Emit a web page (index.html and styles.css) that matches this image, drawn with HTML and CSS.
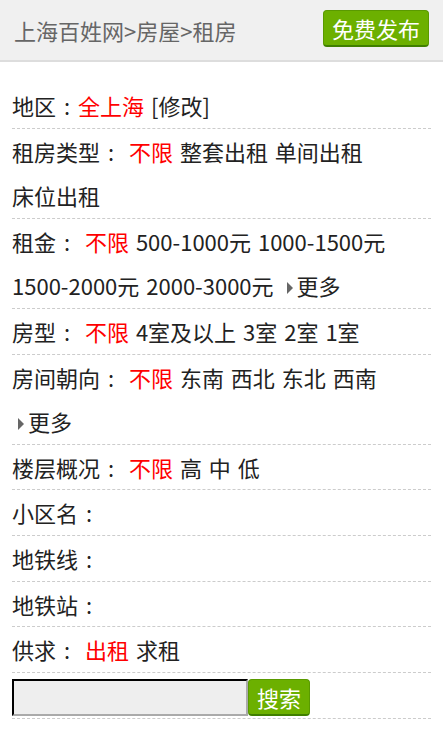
FILE: index.html
```html
<!DOCTYPE html>
<html lang="zh-CN">
<head>
  <meta charset="UTF-8">
  <meta name="viewport" content="width=device-width, initial-scale=1.0">
  <title>上海租房</title>
  <link rel="stylesheet" href="styles.css">
</head>
<body>

<div class="header">
  <div class="crumb">上海百姓网&gt;房屋&gt;租房</div>
  <a class="btn-post" href="#">免费发布</a>
</div>

<ul class="filters">
  <li>地区<span class="colon">:</span><a class="on" href="#">全上海</a> <a href="#">[修改]</a></li>
  <li>租房类型<span class="colon">:</span> <a class="on" href="#">不限</a> <a href="#">整套出租</a> <a href="#">单间出租</a> <a href="#">床位出租</a></li>
  <li>租金<span class="colon">:</span> <a class="on" href="#">不限</a> <a href="#">500-1000元</a> <a href="#">1000-1500元</a> <a href="#">1500-2000元</a> <a href="#">2000-3000元</a> <a class="more" href="#">更多</a></li>
  <li>房型<span class="colon">:</span> <a class="on" href="#">不限</a> <a href="#">4室及以上</a> <a href="#">3室</a> <a href="#">2室</a> <a href="#">1室</a></li>
  <li>房间朝向<span class="colon">:</span> <a class="on" href="#">不限</a> <a href="#">东南</a> <a href="#">西北</a> <a href="#">东北</a> <a href="#">西南</a> <a class="more" href="#">更多</a></li>
  <li>楼层概况<span class="colon">:</span> <a class="on" href="#">不限</a> <a href="#">高</a> <a href="#">中</a> <a href="#">低</a></li>
  <li>小区名<span class="colon">:</span></li>
  <li>地铁线<span class="colon">:</span></li>
  <li>地铁站<span class="colon">:</span></li>
  <li>供求<span class="colon">:</span> <a class="on" href="#">出租</a> <a href="#">求租</a></li>
  <li class="search-row">
    <form class="search">
      <input type="text" class="search-input">
      <button type="submit" class="search-btn">搜索</button>
    </form>
  </li>
</ul>

</body>
</html>
```

FILE: styles.css
```css
body {
  margin: 0;
  font-family: "Noto Sans CJK SC", "Noto Sans", sans-serif;
  color: #222;
  background: #fff;
}
.header {
  display: flex;
  justify-content: space-between;
  align-items: center;
  height: 60px;
  padding: 0 14px;
  background: #f0f0f0;
  border-bottom: 2px solid #ddd;
}
.crumb {
  font-size: 22px;
  color: #666;
}
.btn-post {
  display: block;
  margin-top: -4px;
  padding: 0 8px;
  height: 34px;
  line-height: 34px;
  font-size: 22px;
  color: #fff;
  text-decoration: none;
  background: #6cb000;
  border: 1px solid #5a9a00;
  border-bottom: 2px solid #3f7f00;
  border-radius: 4px;
}
.filters {
  list-style: none;
  margin: 21px 12px 0;
  padding: 0;
  font-size: 22px;
  word-spacing: 2px;
}
.filters li {
  line-height: 44.6px;
  border-bottom: 1px dashed #ccc;
}
.filters a {
  color: inherit;
  text-decoration: none;
  white-space: nowrap;
}
.filters a.on {
  color: #f00;
}
.colon {
  display: inline-block;
  width: 22px;
  text-align: center;
}
.more::before {
  content: "";
  display: inline-block;
  margin: 0 4px 0 6px;
  border-left: 6px solid #666;
  border-top: 6px solid transparent;
  border-bottom: 6px solid transparent;
  vertical-align: 1px;
}
.filters .search-row {
  padding: 6px 0 2px;
  line-height: normal;
}
.search {
  display: flex;
  margin: 0;
}
.search-input {
  width: 236px;
  height: 37px;
  box-sizing: border-box;
  margin: 0;
  border: 2px inset #aaa;
  border-top-color: #222;
  border-left-color: #333;
  background: #eee;
}
.search-btn {
  width: 62px;
  height: 37px;
  padding: 0;
  font-family: inherit;
  font-size: 22px;
  color: #fff;
  background: #6cb000;
  border: 1px solid #5a9a00;
  border-bottom: 2px solid #3f7f00;
  border-radius: 4px;
}
```
